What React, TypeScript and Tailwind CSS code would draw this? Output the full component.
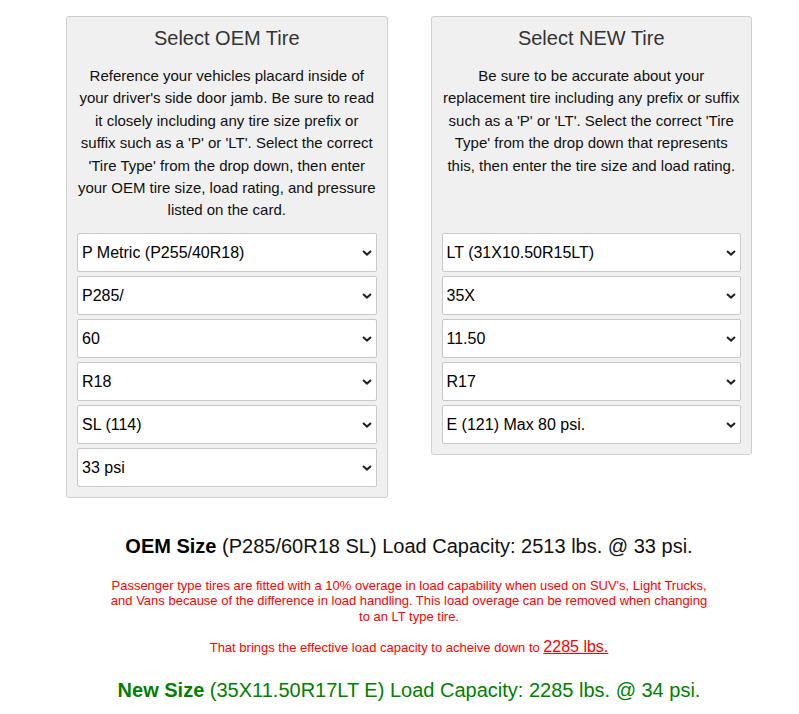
import React from "react";

const oemSelects = [
  "P Metric (P255/40R18)",
  "P285/",
  "60",
  "R18",
  "SL (114)",
  "33 psi",
];

const newSelects = [
  "LT (31X10.50R15LT)",
  "35X",
  "11.50",
  "R17",
  "E (121) Max 80 psi.",
];

function Select({ value }: { value: string }) {
  return (
    <div className="relative h-[39px] w-full">
      <select
        defaultValue={value}
        className="h-full w-full appearance-none rounded-[2px] border border-[#c8c8c8] bg-white pl-[4px] pr-6 text-[16px] text-black outline-none"
      >
        <option>{value}</option>
      </select>
      <svg
        className="pointer-events-none absolute right-[5px] top-[17px]"
        width="10"
        height="6"
        viewBox="0 0 10 6"
      >
        <path
          d="M1 1 L5 4.6 L9 1"
          fill="none"
          stroke="#222"
          strokeWidth="2"
        />
      </svg>
    </div>
  );
}

function Panel({
  title,
  text,
  selects,
}: {
  title: string;
  text: string;
  selects: string[];
}) {
  return (
    <div className="w-[322px] rounded-[3px] border border-[#cfcfcf] bg-[#f0f0f0] px-[10px] pt-[9px] pb-[10px]">
      <h3 className="text-center text-[20px] leading-[24px] text-[#333]">
        {title}
      </h3>
      <div className="mt-[15px] h-[168px]">
        <p className="text-center text-[15px] leading-[22.4px] text-[#111]">
          {text}
        </p>
      </div>
      <div className="flex flex-col gap-[4px]">
        {selects.map((s) => (
          <Select key={s} value={s} />
        ))}
      </div>
    </div>
  );
}

export default function App() {
  return (
    <div className="min-h-[714px] bg-white font-['Liberation_Sans',Arial,sans-serif]">
      <div className="ml-[66px] w-[686px] pt-[16px]">
        <div className="flex items-start gap-[43px]">
          <Panel
            title="Select OEM Tire"
            text="Reference your vehicles placard inside of your driver's side door jamb. Be sure to read it closely including any tire size prefix or suffix such as a 'P' or 'LT'. Select the correct 'Tire Type' from the drop down, then enter your OEM tire size, load rating, and pressure listed on the card."
            selects={oemSelects}
          />
          <Panel
            title="Select NEW Tire"
            text="Be sure to be accurate about your replacement tire including any prefix or suffix such as a 'P' or 'LT'. Select the correct 'Tire Type' from the drop down that represents this, then enter the tire size and load rating."
            selects={newSelects}
          />
        </div>

        <p className="mt-[37px] text-center text-[20px] leading-[23px] text-[#111]">
          <b className="text-black">OEM Size</b> (P285/60R18 SL) Load Capacity:
          2513 lbs. @ 33 psi.
        </p>

        <p className="mx-auto mt-[20px] w-[606px] text-center text-[13px] leading-[15.3px] text-[#ff0000]">
          Passenger type tires are fitted with a 10% overage in load capability
          when used on SUV's, Light Trucks, and Vans because of the difference
          in load handling. This load overage can be removed when changing to
          an LT type tire.
        </p>

        <p className="mt-[14px] text-center text-[13px] leading-[18px] text-[#ff0000]">
          That brings the effective load capacity to acheive down to{" "}
          <span className="text-[16px] underline">2285 lbs.</span>
        </p>

        <p className="mt-[22px] text-center text-[20px] leading-[23px] text-[#008000]">
          <b>New Size</b> (35X11.50R17LT E) Load Capacity: 2285 lbs. @ 34 psi.
        </p>
      </div>
    </div>
  );
}
